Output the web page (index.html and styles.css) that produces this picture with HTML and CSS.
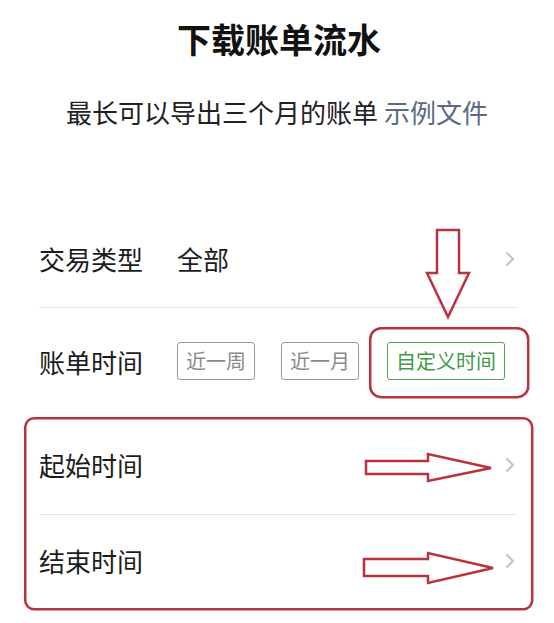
FILE: index.html
```html
<!DOCTYPE html>
<html lang="zh-CN">
<head>
<meta charset="utf-8">
<title>下载账单流水</title>
<link rel="stylesheet" href="styles.css">
</head>
<body>
<main class="page">
  <header class="head">
    <h1 class="title">下载账单流水</h1>
    <p class="subtitle">最长可以导出三个月的账单 <a class="link">示例文件</a></p>
  </header>

  <section class="list">
    <div class="row row-type divided">
      <span class="label">交易类型</span>
      <span class="value">全部</span>
      <svg class="chev" viewBox="0 0 10 16" width="10" height="16"><path d="M1.5 1.5 L8 8 L1.5 14.5" /></svg>
    </div>
    <div class="row row-time">
      <span class="label">账单时间</span>
      <div class="chips">
        <span class="chip">近一周</span>
        <span class="chip">近一月</span>
        <span class="chip chip-on">自定义时间</span>
      </div>
    </div>
    <div class="row row-start divided">
      <span class="label">起始时间</span>
      <svg class="chev" viewBox="0 0 10 16" width="10" height="16"><path d="M1.5 1.5 L8 8 L1.5 14.5" /></svg>
    </div>
    <div class="row row-end">
      <span class="label">结束时间</span>
      <svg class="chev" viewBox="0 0 10 16" width="10" height="16"><path d="M1.5 1.5 L8 8 L1.5 14.5" /></svg>
    </div>
  </section>

  <svg class="marks" viewBox="0 0 554 623" width="554" height="623">
    <polygon points="437,230 459,230 459,273 469,273 448,317 427,273 437,273" />
    <rect x="370.2" y="328.2" width="158" height="69" rx="11" />
    <rect x="25.2" y="418.2" width="507" height="191" rx="9" />
    <polygon points="366,461 428,461 428,454 491,468 428,481 428,474 366,474" />
    <polygon points="364,559 428,559 428,553 493,568 428,583 428,576 364,576" />
  </svg>
</main>
</body>
</html>
```

FILE: styles.css
```css
html, body {
  margin: 0;
  padding: 0;
  background: #ffffff;
}

.page {
  position: relative;
  width: 554px;
  height: 623px;
  overflow: hidden;
  font-family: "Noto Sans CJK SC", "Noto Sans", sans-serif;
  color: #1c1c1c;
}

.head {
  display: flex;
  flex-direction: column;
  align-items: center;
  padding-top: 22px;
}

.title {
  margin: 0;
  font-size: 34px;
  line-height: 34px;
  font-weight: 700;
  color: #111111;
  padding-left: 4px;
}

.subtitle {
  margin: 43px 0 0 0;
  font-size: 26px;
  line-height: 26px;
  color: #222222;
  padding-left: 0;
}

.link {
  color: #5b6a82;
}

.list {
  margin: 85px 37px 0 39px;
  display: flex;
  flex-direction: column;
}

.row {
  display: flex;
  align-items: center;
}

.divided {
  border-bottom: 1.5px solid #e6e6e6;
}

.row-type { height: 97px; }
.row-time { height: 108px; }
.row-start { height: 98px; }
.row-end { height: 92px; }

.label {
  width: 138px;
  flex: none;
  font-size: 26px;
  line-height: 26px;
}

.value {
  font-size: 26px;
  line-height: 26px;
  flex: 1;
}

.chev {
  margin-left: auto;
  margin-right: 2px;
  fill: none;
  stroke: #c3c3c3;
  stroke-width: 2;
}

.chips {
  display: flex;
  gap: 26px;
  margin-top: -2px;
}

.chip {
  display: flex;
  align-items: center;
  height: 38px;
  box-sizing: border-box;
  padding: 0 8px;
  border: 1.5px solid #9a9a9a;
  border-radius: 3px;
  font-size: 20px;
  line-height: 20px;
  color: #8a8a8a;
}

.chip-on {
  margin-left: 2px;
  border-color: #4aa455;
  color: #3f9a4a;
}

.marks {
  position: absolute;
  left: 0;
  top: 0;
  pointer-events: none;
  fill: none;
  stroke: #b9323d;
  stroke-width: 2.5;
  stroke-linejoin: miter;
}
```
